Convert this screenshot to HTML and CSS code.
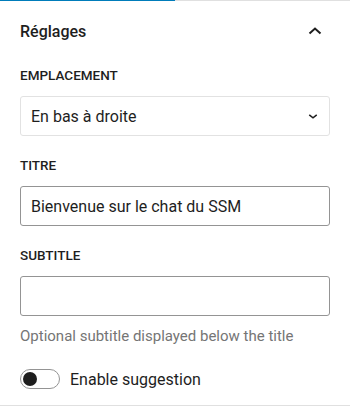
FILE: index.html
```html
<!DOCTYPE html>
<html lang="fr">
<head>
    <meta charset="UTF-8">
    <meta name="viewport" content="width=device-width, initial-scale=1.0">
    <title>Réglages</title>
    <link rel="stylesheet" href="styles.css">
</head>
<body>
    <div class="progress"><span class="progress-bar"></span></div>
    <div class="panel">
        <div class="panel-head">
            <h2>Réglages</h2>
            <svg class="chevron" width="24" height="24" viewBox="0 0 24 24"><polyline points="6.5,14.5 12,9.5 17.5,14.5"/></svg>
        </div>
        <div class="field">
            <label>Emplacement</label>
            <div class="select">
                <span>En bas à droite</span>
                <svg width="18" height="18" viewBox="0 0 24 24"><polyline points="7,10.5 12,14.5 17,10.5"/></svg>
            </div>
        </div>
        <div class="field">
            <label>Titre</label>
            <input class="text-input" type="text" value="Bienvenue sur le chat du SSM">
        </div>
        <div class="field last">
            <label>Subtitle</label>
            <input class="text-input" type="text" value="">
            <p class="help">Optional subtitle displayed below the title</p>
        </div>
        <div class="toggle-row">
            <span class="toggle"><span class="knob"></span></span>
            <span class="toggle-label">Enable suggestion</span>
        </div>
    </div>
</body>
</html>
```

FILE: styles.css
```css
*{
    box-sizing: border-box;
}
body{
    margin: 0;
    width: 350px;
    height: 407px;
    background: #fff;
    font-family: Roboto, "Liberation Sans", sans-serif;
    color: #1e1e1e;
    overflow: hidden;
}
.progress{
    height: 1px;
    background: #e0e0e0;
}
.progress-bar{
    display: block;
    width: 175px;
    height: 1px;
    background: #007cba;
}
.panel{
    display: flex;
    flex-direction: column;
    height: 405px;
    padding: 0 20px;
    border-bottom: 1px solid #e0e0e0;
}
.panel-head{
    display: flex;
    align-items: center;
    justify-content: space-between;
    height: 66px;
    padding-bottom: 6px;
}
.panel-head h2{
    margin: 0;
    font-size: 16px;
    font-weight: 500;
}
.chevron{
    margin-right: 3px;
    fill: none;
    stroke: #1e1e1e;
    stroke-width: 2;
}
.field{
    display: flex;
    flex-direction: column;
    margin-bottom: 21px;
}
.field.last{
    margin-bottom: 0;
}
.field label{
    font-size: 13.5px;
    font-weight: 500;
    text-transform: uppercase;
    line-height: 16px;
    margin-bottom: 13px;
}
.select{
    display: flex;
    align-items: center;
    justify-content: space-between;
    height: 40px;
    padding: 0 7px 0 10px;
    border: 1px solid #e2e2e2;
    border-radius: 3px;
    font-size: 16px;
}
.select svg{
    fill: none;
    stroke: #1e1e1e;
    stroke-width: 2;
}
.text-input{
    display: block;
    width: 100%;
    height: 40px;
    margin: 0;
    padding: 0 10px;
    border: 1px solid #949494;
    border-radius: 3px;
    font-family: inherit;
    font-size: 16px;
    color: #1e1e1e;
}
.help{
    margin: 11px 0 0;
    font-size: 15px;
    line-height: 18px;
    color: #757575;
}
.toggle-row{
    display: flex;
    align-items: center;
    gap: 10px;
    margin-top: 24px;
}
.toggle{
    position: relative;
    width: 40px;
    height: 20px;
    border: 1px solid #949494;
    border-radius: 10px;
}
.knob{
    position: absolute;
    top: 2px;
    left: 2px;
    width: 14px;
    height: 14px;
    border-radius: 50%;
    background: #1e1e1e;
}
.toggle-label{
    font-size: 16px;
}
```
